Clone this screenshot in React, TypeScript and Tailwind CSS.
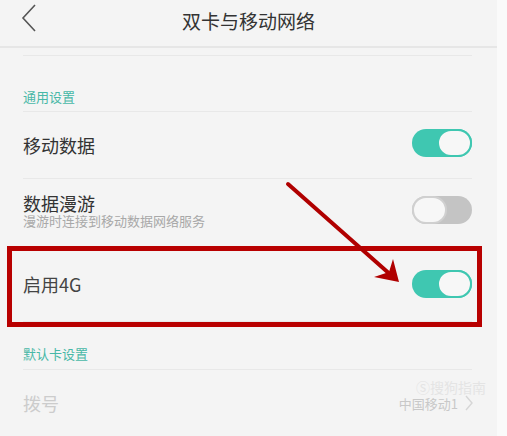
import React from "react";

function Toggle({ on }: { on: boolean }) {
  return on ? (
    <div className="w-[60px] h-[28px] rounded-full bg-[#3fc7b1] flex items-center justify-end">
      <div className="w-[35px] h-[28px] rounded-full bg-[#f7f7f7] border-2 border-[#3fc7b1]" />
    </div>
  ) : (
    <div className="w-[60px] h-[28px] rounded-full bg-[#c4c4c4] flex items-center justify-start">
      <div className="w-[35px] h-[28px] rounded-full bg-[#f7f7f7] border-2 border-[#d0d0d0]" />
    </div>
  );
}

export default function App() {
  const font = { fontFamily: '"Noto Sans CJK SC", "Noto Sans", sans-serif' };
  return (
    <div className="w-[507px] h-[436px] bg-[#fafafa] flex overflow-hidden relative" style={font}>
      <div className="w-[497px] h-full bg-[#f4f4f4] flex flex-col">
        <div className="h-[48px] flex items-center relative border-b-2 border-[#e6e6e6]">
          <svg className="absolute left-[20px] top-[4px]" width="18" height="28" viewBox="0 0 18 28">
            <path d="M15 1 L3 14 L15 27" fill="none" stroke="#555" strokeWidth="1.6" />
          </svg>
          <div className="w-full text-center text-[19px] text-[#333] leading-none -mt-[6px]">双卡与移动网络</div>
        </div>
        <div className="mx-[23px] mr-[25px] mt-[7px] border-b border-[#e8e8e8]" />
        <div className="mx-[23px] mr-[25px] h-[56px] flex items-end pb-[8px] border-b border-[#e8e8e8]">
          <span className="text-[13px] text-[#48b8a7] leading-none">通用设置</span>
        </div>
        <div className="mx-[23px] mr-[25px] h-[67px] flex items-center justify-between border-b border-[#e8e8e8]">
          <span className="text-[18px] text-[#333] leading-none">移动数据</span>
          <div className="-mt-[4px]"><Toggle on /></div>
        </div>
        <div className="mx-[23px] mr-[25px] h-[68px] flex items-center justify-between">
          <div className="flex flex-col -mt-[4px]">
            <span className="text-[18px] text-[#333] leading-[18px]">数据漫游</span>
            <span className="text-[13px] text-[#a8a8a8] leading-[14px] mt-[2px]">漫游时连接到移动数据网络服务</span>
          </div>
          <div className="-mt-[6px]"><Toggle on={false} /></div>
        </div>
        <div className="mx-[23px] mr-[25px] h-[75px] flex items-center justify-between border-b border-[#e8e8e8]">
          <span className="text-[18px] text-[#444] leading-none">启用4G</span>
          <Toggle on />
        </div>
        <div className="mx-[23px] mr-[25px] h-[48px] flex items-end pb-[9px] border-b border-[#e8e8e8]">
          <span className="text-[13px] text-[#48b8a7] leading-none">默认卡设置</span>
        </div>
        <div className="mx-[23px] mr-[25px] h-[66px] flex items-center justify-between">
          <span className="text-[18px] text-[#cccccc] leading-none">拨号</span>
          <div className="flex items-center gap-[6px] relative -mr-[2px]">
            <span className="text-[13px] text-[#c8c8c8] leading-none">中国移动1</span>
            <svg width="10" height="18" viewBox="0 0 10 18">
              <path d="M2 2 L8 9 L2 16" fill="none" stroke="#d6d6d6" strokeWidth="1.4" />
            </svg>
            <span className="absolute -right-[12px] -top-[14px] text-[14px] text-[#e4e4e4] leading-none whitespace-nowrap">Ⓢ搜狗指南</span>
          </div>
        </div>
      </div>
      <div className="absolute left-[7px] top-[246px] w-[475px] h-[81px] border-[5px] border-[#b80000]" />
      <svg className="absolute left-0 top-0" width="507" height="436" viewBox="0 0 507 436">
        <line x1="288" y1="184" x2="392" y2="276" stroke="#b00000" strokeWidth="4" strokeLinecap="round" />
        <path d="M399 282 L393 259 L389 272 L374 277 Z" fill="#b00000" />
      </svg>
    </div>
  );
}
